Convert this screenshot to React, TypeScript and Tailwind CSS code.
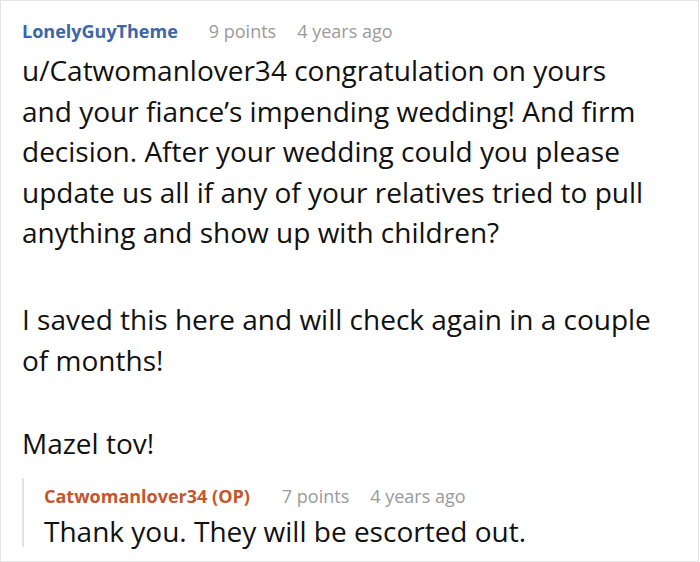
export default function App() {
  return (
    <div className="w-[699px] h-[562px] bg-white border border-[#e4e4e4] pl-[21px] pt-[18px] font-['Open_Sans',sans-serif] overflow-hidden">
      {/* Parent comment */}
      <div className="flex items-baseline text-[18px] leading-6">
        <span className="font-bold text-[#3b66a8]">LonelyGuyTheme</span>
        <span className="ml-[31px] text-[#9a9a9a]">9 points</span>
        <span className="ml-[21px] text-[#9a9a9a]">4 years ago</span>
      </div>
      <div className="mt-[7px] w-[636px] text-[28px] leading-[40.6px] text-[#111]">
        <p>
          u/Catwomanlover34 congratulation on yours and your fiance’s impending wedding! And firm
          decision. After your wedding could you please update us all if any of your relatives tried
          to pull anything and show up with children?
        </p>
        <p className="mt-[46px]">I saved this here and will check again in a couple of months!</p>
        <p className="mt-[43px]">Mazel tov!</p>
      </div>

      {/* Reply */}
      <div className="mt-[14px] flex">
        <div className="w-[2px] h-[69px] bg-[#e2e2e2]" />
        <div className="pl-[20px] pt-[6px]">
          <div className="flex items-baseline text-[18px] leading-6">
            <span className="font-bold text-[#c5562b]">Catwomanlover34 (OP)</span>
            <span className="ml-[32px] text-[#9a9a9a]">7 points</span>
            <span className="ml-[21px] text-[#9a9a9a]">4 years ago</span>
          </div>
          <p className="mt-[3px] text-[28px] leading-[40.6px] text-[#111]">
            Thank you. They will be escorted out.
          </p>
        </div>
      </div>
    </div>
  );
}
